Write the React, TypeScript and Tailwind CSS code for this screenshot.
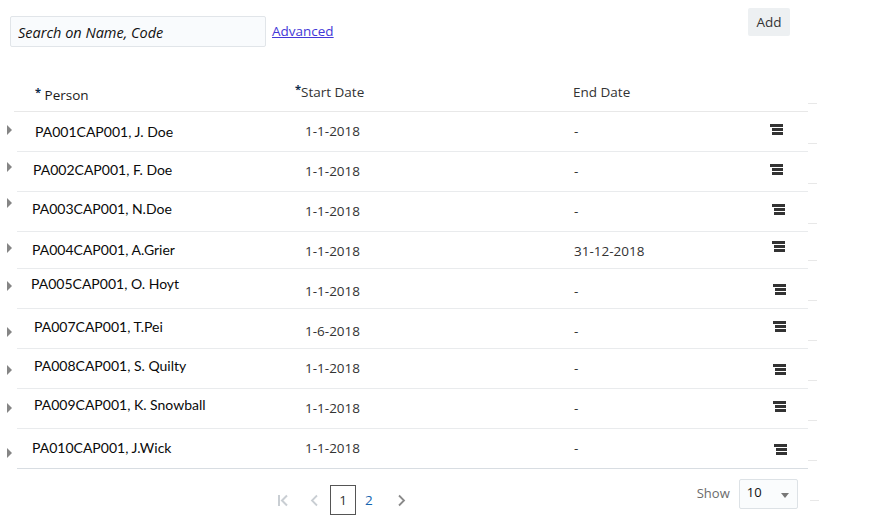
import React from 'react';

type Row = {
  name: string;
  start: string;
  end: string;
  h: string;
  tri: string;
  nm: string;
  dt: string;
  ed: string;
  ic: string;
  line: string;
};

// Offsets are per row: the source grid is a bit uneven, so each cell keeps its own top padding.
const ROWS: Row[] = [
  { name: 'PA001CAP001, J. Doe', start: '1-1-2018', end: '-', h: 'h-[40px]', tri: 'pt-[13px]', nm: 'pl-[18px] pt-[10px]', dt: 'pt-[9px]', ed: 'pt-[9px]', ic: 'pl-0 pt-[12px]', line: 'border-[#e9ebed]' },
  { name: 'PA002CAP001, F. Doe', start: '1-1-2018', end: '-', h: 'h-[40px]', tri: 'pt-[10px]', nm: 'pl-[16px] pt-[8px]', dt: 'pt-[9px]', ed: 'pt-[9px]', ic: 'pl-0 pt-[12px]', line: 'border-[#e9ebed]' },
  { name: 'PA003CAP001, N.Doe', start: '1-1-2018', end: '-', h: 'h-[40px]', tri: 'pt-[6px]', nm: 'pl-[15px] pt-[7px]', dt: 'pt-[9px]', ed: 'pt-[9px]', ic: 'pl-[2px] pt-[12px]', line: 'border-[#e9ebed]' },
  { name: 'PA004CAP001, A.Grier', start: '1-1-2018', end: '31-12-2018', h: 'h-[37px]', tri: 'pt-[11px]', nm: 'pl-[15px] pt-[8px]', dt: 'pt-[9px]', ed: 'pt-[9px]', ic: 'pl-[2px] pt-[9px]', line: 'border-[#e9ebed]' },
  { name: 'PA005CAP001, O. Hoyt', start: '1-1-2018', end: '-', h: 'h-[40px]', tri: 'pt-[12px]', nm: 'pl-[14px] pt-[5px]', dt: 'pt-[12px]', ed: 'pt-[12px]', ic: 'pl-[3px] pt-[15px]', line: 'border-[#e9ebed]' },
  { name: 'PA007CAP001, T.Pei', start: '1-6-2018', end: '-', h: 'h-[40px]', tri: 'pt-[18px]', nm: 'pl-[17px] pt-[8px]', dt: 'pt-[12px]', ed: 'pt-[12px]', ic: 'pl-[3px] pt-[12px]', line: 'border-[#e9ebed]' },
  { name: 'PA008CAP001, S. Quilty', start: '1-1-2018', end: '-', h: 'h-[40px]', tri: 'pt-[16px]', nm: 'pl-[17px] pt-[7px]', dt: 'pt-[9px]', ed: 'pt-[9px]', ic: 'pl-[3px] pt-[15px]', line: 'border-[#e9ebed]' },
  { name: 'PA009CAP001, K. Snowball', start: '1-1-2018', end: '-', h: 'h-[40px]', tri: 'pt-[14px]', nm: 'pl-[17px] pt-[6px]', dt: 'pt-[9px]', ed: 'pt-[9px]', ic: 'pl-[3px] pt-[12px]', line: 'border-[#e9ebed]' },
  { name: 'PA010CAP001, J.Wick', start: '1-1-2018', end: '-', h: 'h-[40px]', tri: 'pt-[19px]', nm: 'pl-[15px] pt-[9px]', dt: 'pt-[9px]', ed: 'pt-[9px]', ic: 'pl-[4px] pt-[15px]', line: 'border-[#d8dde2]' },
];

function MenuIcon() {
  return (
    <div className="flex w-[13px] flex-col items-end gap-[1px]">
      <div className="h-[3px] w-[13px] bg-[#333]" />
      <div className="h-[3px] w-[11px] bg-[#333]" />
      <div className="h-[3px] w-[11px] bg-[#333]" />
    </div>
  );
}

function Tick() {
  return (
    <div className="flex w-[9px] flex-col justify-end">
      <div className="mb-[8px] h-px w-[9px] bg-[#e8e8e8]" />
    </div>
  );
}

export default function App() {
  return (
    <div className="h-[520px] w-[880px] overflow-hidden bg-white font-['Open_Sans',sans-serif]">
      {/* toolbar */}
      <div className="flex w-[790px] items-start justify-between pt-2">
        <div className="ml-[10px] mt-2 flex items-center">
          <input
            readOnly
            placeholder="Search on Name, Code"
            className="h-[31px] w-[256px] rounded-[2px] border border-[#e1e5e9] bg-[#f9fbfd] px-[7px] pt-[2px] text-[14.5px] italic text-[#111] outline-none placeholder:text-[#111]"
          />
          <a href="#" className="ml-[6px] -mt-[1px] text-[13.5px] text-[#4338d8] underline">
            Advanced
          </a>
        </div>
        <button className="h-[28px] w-[42px] rounded-[2px] bg-[#edf0f2] text-[13.5px] text-[#333]">
          Add
        </button>
      </div>

      {/* header */}
      <div className="mt-[33px] flex">
        <div className="ml-[14px] flex h-[32px] w-[794px] border-b border-[#e8e8e8] text-[13.5px] leading-[20px]">
          <div className="w-[281px] pl-[21px] pt-[5px] text-[#1a1a1a]">
            <span className="align-top text-[11px] font-bold leading-[14px] text-[#0c2a4a]">*</span> Person
          </div>
          <div className="w-[278px] pt-[2px] text-[#333]">
            <span className="align-top text-[11px] font-bold leading-[14px] text-[#0c2a4a]">*</span>Start Date
          </div>
          <div className="pt-[2px] text-[#333]">End Date</div>
        </div>
        <Tick />
      </div>

      {/* rows */}
      {ROWS.map((r) => (
        <div key={r.name} className={`flex ${r.h}`}>
          <div className={`w-[17px] pl-[7px] ${r.tri}`}>
            <div className="h-0 w-0 border-y-[5px] border-l-[5px] border-y-transparent border-l-[#858585]" />
          </div>
          <div className={`flex w-[791px] border-b ${r.line} leading-[20px]`}>
            <div className={`w-[288px] font-['Lato',sans-serif] text-[14px] text-[#0a0a0a] ${r.nm}`}>{r.name}</div>
            <div className={`w-[268px] text-[13.5px] text-[#333] ${r.dt}`}>{r.start}</div>
            <div className={`w-[197px] pl-[1px] text-[13.5px] text-[#333] ${r.ed}`}>{r.end}</div>
            <div className={`w-[38px] ${r.ic}`}>
              <MenuIcon />
            </div>
          </div>
          <Tick />
        </div>
      ))}

      {/* footer */}
      <div className="flex items-start">
        <div className="ml-[277px] mt-[16px] flex h-[30px] items-center">
          <svg width="12" height="13" viewBox="0 0 12 13" className="text-[#c9ced3]">
            <path d="M2 1v11" stroke="currentColor" strokeWidth="2" />
            <path d="M10 1.5 5 6.5l5 5" stroke="currentColor" strokeWidth="2" fill="none" />
          </svg>
          <svg width="9" height="13" viewBox="0 0 9 13" className="ml-[21px] text-[#c9ced3]">
            <path d="M7 1.5 2 6.5l5 5" stroke="currentColor" strokeWidth="1.8" fill="none" />
          </svg>
          <div className="ml-[11px] flex h-[30px] w-[26px] items-center justify-center border border-[#555] text-[13.5px] text-[#333]">
            1
          </div>
          <span className="ml-[9px] text-[13.5px] text-[#1565b0]">2</span>
          <svg width="9" height="13" viewBox="0 0 9 13" className="ml-[24px] text-[#8a8a8a]">
            <path d="M2 1.5l5 5-5 5" stroke="currentColor" strokeWidth="1.8" fill="none" />
          </svg>
        </div>
        <div className="ml-[291px] mt-[10px] flex items-center">
          <span className="text-[13px] text-[#6b6b6b]">Show</span>
          <div className="ml-[9px] flex h-[30px] w-[59px] items-start justify-between rounded-[2px] border border-[#dde2e6] bg-[#fafcfd] pl-[7px] pr-[8px] pt-[3px]">
            <span className="text-[13px] leading-[18px] text-[#111]">10</span>
            <div className="mt-[10px] h-0 w-0 border-x-[4px] border-t-[5px] border-x-transparent border-t-[#777]" />
          </div>
        </div>
        <div className="ml-[12px] mt-[31px] h-px w-[9px] bg-[#e8e8e8]" />
      </div>
    </div>
  );
}
